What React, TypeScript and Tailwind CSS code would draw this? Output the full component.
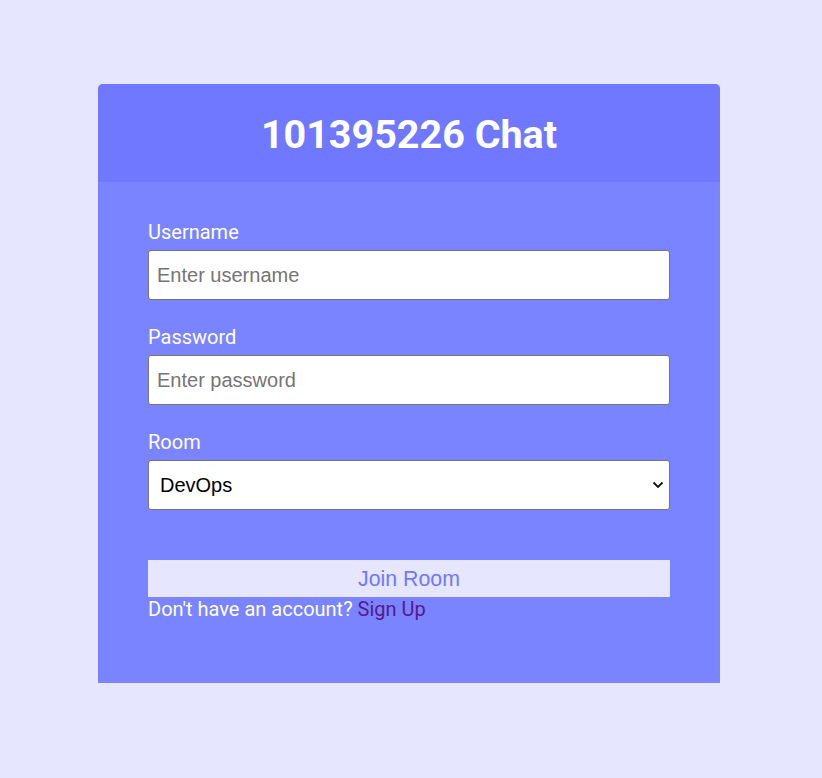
import React from "react";

export default function App() {
  return (
    <div className="min-h-[778px] w-full bg-[#e6e6ff] pt-[84px]" style={{ fontFamily: "Roboto, sans-serif" }}>
      <div className="ml-[98px] w-[622px] overflow-hidden rounded-t-[5px] bg-[#7a84ff]">
        <div className="flex h-[98px] items-center justify-center bg-[#6f78ff] pt-[3px]">
          <h1 className="text-[39.5px] font-bold text-white">101395226 Chat</h1>
        </div>
        <div className="flex flex-col px-[50px] pt-[38px] pb-[62px]">
          <label className="text-[20px] leading-[24px] text-white">Username</label>
          <input
            className="mt-[6px] h-[50px] w-full rounded-[3px] border border-[#767676] bg-white px-[8px] text-[20px] text-black placeholder:text-[#757575] outline-none"
            style={{ fontFamily: "'Liberation Sans', Arial, sans-serif" }}
            placeholder="Enter username"
          />
          <label className="mt-[25px] text-[20px] leading-[24px] text-white">Password</label>
          <input
            type="password"
            className="mt-[6px] h-[50px] w-full rounded-[3px] border border-[#767676] bg-white px-[8px] text-[20px] text-black placeholder:text-[#757575] outline-none"
            style={{ fontFamily: "'Liberation Sans', Arial, sans-serif" }}
            placeholder="Enter password"
          />
          <label className="mt-[25px] text-[20px] leading-[24px] text-white">Room</label>
          <div className="relative mt-[6px] h-[50px] w-full rounded-[3px] border border-[#767676] bg-white">
            <div
              className="flex h-full items-center pl-[11px] text-[20px] text-black"
              style={{ fontFamily: "'Liberation Sans', Arial, sans-serif" }}
            >
              DevOps
            </div>
            <svg className="absolute right-[5px] top-[18px]" width="12" height="12" viewBox="0 0 12 12">
              <path d="M1.5 3.5 L6 8 L10.5 3.5" fill="none" stroke="#111" strokeWidth="1.8" />
            </svg>
          </div>
          <button
            className="mt-[50px] h-[37px] w-full bg-[#e6e6ff] text-[21.3px] leading-[24px] text-[#6f78ff]"
            style={{ fontFamily: "'Liberation Sans', Arial, sans-serif" }}
          >
            Join Room
          </button>
          <div className="text-[20px] leading-[24px] text-white">
            Don't have an account? <span className="text-[#551a8b]">Sign Up</span>
          </div>
        </div>
      </div>
    </div>
  );
}
